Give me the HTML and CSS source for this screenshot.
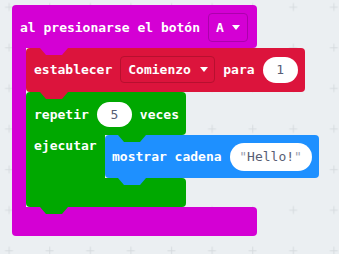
FILE: index.html
```html
<!DOCTYPE html>
<html lang="es">
<head>
    <meta charset="UTF-8">
    <meta name="viewport" content="width=device-width, initial-scale=1.0">
    <title>Bloques</title>
    <link rel="stylesheet" href="styles.css">
</head>
<body>

<div class="workspace">
    <!-- grid of small crosses behind the blocks -->
    <svg class="grid" width="339" height="254">
        <defs>
            <pattern id="cross" width="40.6" height="40.6" patternUnits="userSpaceOnUse" patternTransform="translate(-11.3 -13.3)">
                <path d="M16.3 20.5 h8 M20.5 16.3 v8" stroke="#d6dbdf" stroke-width="1" fill="none"/>
            </pattern>
        </defs>
        <rect width="339" height="254" fill="url(#cross)"/>
    </svg>

    <div class="block event">
        <div class="head row tab">
            <span>al presionarse el botón</span>
            <span class="dropdown drop-a">A
                <svg width="8" height="5"><polygon points="0,0 8,0 4,5" fill="#fff"/></svg>
            </span>
        </div>
        <div class="c-body">
            <div class="arm"></div>
            <div class="stack">
                <div class="set row tab">
                    <span>establecer</span>
                    <span class="dropdown drop-var">Comienzo
                        <svg width="8" height="5"><polygon points="0,0 8,0 4,5" fill="#fff"/></svg>
                    </span>
                    <span>para</span>
                    <span class="field num-1">1</span>
                </div>
                <div class="loop">
                    <div class="head row tab">
                        <span>repetir</span>
                        <span class="field num-5">5</span>
                        <span>veces</span>
                    </div>
                    <div class="c-body">
                        <div class="arm">ejecutar</div>
                        <div class="stack">
                            <div class="show row tab">
                                <span>mostrar cadena</span>
                                <span class="field str"><i>"</i>Hello!<i>"</i></span>
                            </div>
                        </div>
                    </div>
                    <div class="foot tab"></div>
                </div>
            </div>
        </div>
        <div class="foot"></div>
    </div>
</div>

</body>
</html>
```

FILE: styles.css
```css
body {
    margin: 0;
    background-color: #ebeff2;
    font-family: "DejaVu Sans Mono", monospace;
    font-size: 13px;
    font-weight: bold;
    color: white;
}

.workspace {
    position: relative;
    width: 339px;
    height: 254px;
    padding: 5px 0 0 12px;
    box-sizing: border-box;
    overflow: hidden;
}

.grid {
    position: absolute;
    top: 0;
    left: 0;
}

.row {
    display: flex;
    align-items: center;
    gap: 8px;
    line-height: 16px;
    white-space: nowrap;
    box-sizing: border-box;
}

.block {
    position: relative;
    display: flex;
    flex-direction: column;
    align-items: flex-start;
    width: fit-content;
}

.c-body {
    display: flex;
    align-items: stretch;
}

.stack {
    display: flex;
    flex-direction: column;
    align-items: flex-start;
}

/* the little tab that fits into the notch of the next block */
.tab {
    position: relative;
}

.tab::after {
    content: "";
    position: absolute;
    top: 100%;
    left: 14px;
    width: 28px;
    height: 7px;
    background: inherit;
    clip-path: polygon(0 0, 100% 0, 22px 100%, 6px 100%);
    z-index: 2;
}

/* event block */
.event > .head {
    width: 245px;
    padding: 8px 8px 6px 8px;
    background-color: #d400d4;
    border-radius: 4px 4px 4px 0;
}

.event > .head::after {
    left: 28px;
}

.event > .c-body > .arm {
    width: 14px;
    background-color: #d400d4;
}

.event > .foot {
    width: 245px;
    height: 29px;
    background-color: #d400d4;
    border-radius: 0 4px 4px 4px;
}

/* variable block */
.set {
    padding: 8px 7px 9px 8px;
    background-color: #dc143c;
    border-radius: 4px;
}

/* loop block */
.loop {
    display: flex;
    flex-direction: column;
    align-items: flex-start;
}

.loop > .head {
    width: 160px;
    padding: 10px 7px 8px 8px;
    background-color: #00a800;
    border-radius: 4px 4px 4px 0;
}

.loop > .head::after {
    left: 92px;
}

.loop > .c-body > .arm {
    width: 79px;
    padding: 3px 0 0 8px;
    box-sizing: border-box;
    line-height: 16px;
    background-color: #00a800;
}

.loop > .foot {
    width: 160px;
    height: 29px;
    background-color: #00a800;
    border-radius: 0 4px 4px 4px;
}

.loop > .foot::after {
    left: 14px;
}

/* basic block */
.show {
    padding: 8px 7px 7px 7px;
    background-color: #1e90ff;
    border-radius: 4px;
}

.show::after {
    left: 13px;
}

/* dropdowns and inputs */
.dropdown {
    display: flex;
    align-items: center;
    padding-left: 7px;
    box-sizing: border-box;
    border-radius: 4px;
}

.drop-a {
    width: 40px;
    height: 29px;
    gap: 8px;
    border: 1px solid #ad00ad;
}

.drop-var {
    width: 95px;
    height: 27px;
    gap: 9px;
    border: 1px solid #b7102f;
}

.field {
    display: flex;
    align-items: center;
    justify-content: center;
    background-color: white;
    color: #575e75;
    font-weight: normal;
    border-radius: 14px;
}

.num-1 {
    width: 35px;
    height: 26px;
}

.num-5 {
    width: 36px;
    height: 25px;
}

.str {
    width: 82px;
    height: 28px;
}

.str i {
    font-style: normal;
    color: #9b9dae;
}
```
